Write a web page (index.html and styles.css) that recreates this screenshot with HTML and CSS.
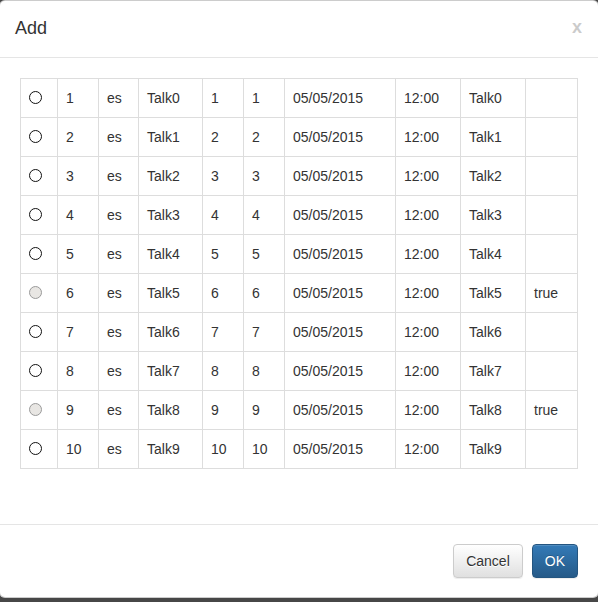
FILE: index.html
```html
<!DOCTYPE html>
<html>
<head>
<meta charset="utf-8">
<link rel="stylesheet" href="styles.css">
</head>
<body>
<div class="modal">
  <div class="modal-header">
    <h4 class="modal-title">Add</h4>
    <button class="close" type="button">x</button>
  </div>
  <div class="modal-body">
    <table class="table">
      <colgroup>
        <col class="c-radio"><col class="c-id"><col class="c-lang"><col class="c-talk"><col class="c-n"><col class="c-n2"><col class="c-date"><col class="c-time"><col class="c-name"><col class="c-flag">
      </colgroup>
      <tbody>
        <tr><td><input type="radio" name="r"></td><td>1</td><td>es</td><td>Talk0</td><td>1</td><td>1</td><td>05/05/2015</td><td>12:00</td><td>Talk0</td><td></td></tr>
        <tr><td><input type="radio" name="r"></td><td>2</td><td>es</td><td>Talk1</td><td>2</td><td>2</td><td>05/05/2015</td><td>12:00</td><td>Talk1</td><td></td></tr>
        <tr><td><input type="radio" name="r"></td><td>3</td><td>es</td><td>Talk2</td><td>3</td><td>3</td><td>05/05/2015</td><td>12:00</td><td>Talk2</td><td></td></tr>
        <tr><td><input type="radio" name="r"></td><td>4</td><td>es</td><td>Talk3</td><td>4</td><td>4</td><td>05/05/2015</td><td>12:00</td><td>Talk3</td><td></td></tr>
        <tr><td><input type="radio" name="r"></td><td>5</td><td>es</td><td>Talk4</td><td>5</td><td>5</td><td>05/05/2015</td><td>12:00</td><td>Talk4</td><td></td></tr>
        <tr><td><input type="radio" name="r" disabled></td><td>6</td><td>es</td><td>Talk5</td><td>6</td><td>6</td><td>05/05/2015</td><td>12:00</td><td>Talk5</td><td>true</td></tr>
        <tr><td><input type="radio" name="r"></td><td>7</td><td>es</td><td>Talk6</td><td>7</td><td>7</td><td>05/05/2015</td><td>12:00</td><td>Talk6</td><td></td></tr>
        <tr><td><input type="radio" name="r"></td><td>8</td><td>es</td><td>Talk7</td><td>8</td><td>8</td><td>05/05/2015</td><td>12:00</td><td>Talk7</td><td></td></tr>
        <tr><td><input type="radio" name="r" disabled></td><td>9</td><td>es</td><td>Talk8</td><td>9</td><td>9</td><td>05/05/2015</td><td>12:00</td><td>Talk8</td><td>true</td></tr>
        <tr><td><input type="radio" name="r"></td><td>10</td><td>es</td><td>Talk9</td><td>10</td><td>10</td><td>05/05/2015</td><td>12:00</td><td>Talk9</td><td></td></tr>
      </tbody>
    </table>
  </div>
  <div class="modal-footer">
    <button class="btn btn-default" type="button">Cancel</button>
    <button class="btn btn-primary" type="button">OK</button>
  </div>
</div>
</body>
</html>
```
FILE: styles.css
```css
html, body {
  margin: 0;
  padding: 0;
  background: #474747;
  height: 602px;
  overflow: hidden;
}
body {
  font-family: "Liberation Sans", Arial, sans-serif;
  font-size: 14px;
  color: #333;
  line-height: 1.42857;
}
.modal {
  width: 598px;
  margin-left: -1px;
  background: #fff;
  border: 1px solid rgba(0,0,0,.2);
  border-radius: 6px;
}
.modal-header {
  display: flex;
  align-items: flex-start;
  justify-content: space-between;
  padding: 15px 15px 15px 15px;
  border-bottom: 1px solid #e5e5e5;
}
.modal-title {
  margin: 0;
  font-size: 18px;
  font-weight: 500;
  line-height: 1.42857;
  color: #333;
}
.close {
  margin: 0;
  padding: 0;
  border: 0;
  background: transparent;
  font-family: "Liberation Sans", Arial, sans-serif;
  font-size: 18px;
  font-weight: bold;
  line-height: 1;
  color: #000;
  opacity: .2;
  margin-top: 2px;
  margin-right: 1px;
}
.modal-body {
  padding: 20px 20px 35px 20px;
}
.table {
  width: 557px;
  border-collapse: collapse;
  table-layout: fixed;
  margin: 0 0 20px 0;
}
.table td {
  border: 1px solid #ddd;
  padding: 8px;
  line-height: 22px;
  vertical-align: top;
  white-space: nowrap;
}
.c-radio { width: 37px; }
.c-id { width: 41px; }
.c-lang { width: 40px; }
.c-talk { width: 64px; }
.c-n { width: 41px; }
.c-n2 { width: 41px; }
.c-date { width: 111px; }
.c-time { width: 65px; }
.c-name { width: 65px; }
.c-flag { width: 52px; }
input[type=radio] {
  -webkit-appearance: none;
  appearance: none;
  display: block;
  width: 13px;
  height: 13px;
  margin: 4px 0 0 0;
  border: 1px solid #111;
  border-radius: 50%;
  background: #fff;
  box-sizing: border-box;
}
input[type=radio]:disabled {
  background: #e8e6e3;
  border-color: #9a9a9a;
}
.modal-footer {
  display: flex;
  justify-content: flex-end;
  gap: 9px;
  padding: 19px 20px 19px 20px;
  border-top: 1px solid #e5e5e5;
}
.btn {
  font-family: "Liberation Sans", Arial, sans-serif;
  font-size: 14px;
  line-height: 20px;
  padding: 6px 12px;
  border-radius: 4px;
  border: 1px solid transparent;
  box-shadow: inset 0 1px 0 rgba(255,255,255,.15), 0 1px 1px rgba(0,0,0,.075);
}
.btn-default {
  color: #333;
  text-shadow: 0 1px 0 #fff;
  background: linear-gradient(to bottom, #fff 0%, #e0e0e0 100%);
  border-color: #ccc;
}
.btn-primary {
  color: #fff;
  text-shadow: 0 -1px 0 rgba(0,0,0,.2);
  background: linear-gradient(to bottom, #337ab7 0%, #265a88 100%);
  border-color: #245580;
}
```
